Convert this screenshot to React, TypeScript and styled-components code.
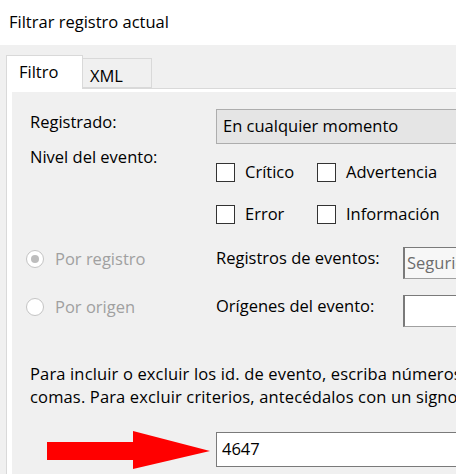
import * as React from "react";
import styled, { createGlobalStyle } from "styled-components";

const GlobalStyle = createGlobalStyle`
  html, body {
    margin: 0;
    padding: 0;
    background: #f0f0f0;
    overflow: hidden;
  }
  body {
    font-family: "Open Sans", "Noto Sans", sans-serif;
    font-size: 16.5px;
    color: #000;
  }
`;

const Dialog = styled.div`
  width: 456px;
  height: 474px;
  overflow: hidden;
  background: #f0f0f0;
`;

const TitleBar = styled.div`
  height: 45px;
  background: #fff;
  display: flex;
  align-items: center;
  padding-left: 9px;
  padding-bottom: 2px;
  box-sizing: border-box;
`;

const Body = styled.div`
  padding: 10px 0 0 6px;
`;

const TabStrip = styled.div`
  display: flex;
  align-items: flex-end;
  height: 33px;
  position: relative;
  z-index: 1;
`;

const Tab = styled.div<{ $active?: boolean }>`
  box-sizing: border-box;
  width: ${(p) => (p.$active ? "77px" : "69px")};
  height: ${(p) => (p.$active ? "34px" : "30px")};
  margin-bottom: ${(p) => (p.$active ? "-1px" : "0")};
  background: ${(p) => (p.$active ? "#fff" : "#f0f0f0")};
  border: 1px solid #d9d9d9;
  border-bottom: ${(p) => (p.$active ? "none" : "1px solid #d9d9d9")};
  border-left: ${(p) => (p.$active ? "1px solid #d9d9d9" : "none")};
  padding: ${(p) => (p.$active ? "4px 0 0 12px" : "5px 0 0 7px")};
  line-height: 24px;
`;

const TabPage = styled.div`
  border: 1px solid #d9d9d9;
  border-right: none;
  background: #fff;
  padding: 3px 0 0 5px;
`;

const Panel = styled.div`
  background: #f0f0f0;
  height: 420px;
  padding-top: 17px;
  box-sizing: border-box;
`;

const FieldGrid = styled.div`
  display: grid;
  grid-template-columns: 186px 1fr;
  padding-left: 18px;
`;

const Label = styled.div<{ $top?: number }>`
  display: flex;
  align-items: ${(p) => (p.$top !== undefined ? "flex-start" : "center")};
  padding-top: ${(p) => p.$top ?? 0}px;
  padding-bottom: ${(p) => (p.$top !== undefined ? 0 : 10)}px;
  color: #000;
  white-space: nowrap;
  line-height: 22px;
`;

const Combo = styled.div`
  height: 35px;
  box-sizing: border-box;
  background: #e5e5e5;
  border: 1px solid #adadad;
  border-right: none;
  display: flex;
  align-items: center;
  padding: 0 0 2px 6px;
  white-space: nowrap;
`;

const CheckGrid = styled.div`
  display: grid;
  grid-template-columns: 101px 1fr;
  grid-auto-rows: 42px;
  margin-top: 19px;
`;

const CheckItem = styled.label`
  display: flex;
  align-items: flex-start;
  gap: 10px;
  white-space: nowrap;
  line-height: 18px;
`;

const CheckBox = styled.span`
  width: 19px;
  height: 19px;
  box-sizing: border-box;
  border: 1px solid #333;
  background: #fff;
  flex: none;
`;

const SourceGrid = styled.div`
  display: grid;
  grid-template-columns: 190px 187px 1fr;
  grid-auto-rows: 32px;
  row-gap: 16px;
  padding-left: 14px;
`;

const RadioItem = styled.div`
  display: flex;
  align-items: center;
  gap: 11px;
  padding-bottom: 10px;
  color: #a0a0a0;
  white-space: nowrap;
`;

const Radio = styled.span<{ $checked?: boolean }>`
  width: 18px;
  height: 18px;
  box-sizing: border-box;
  border-radius: 50%;
  border: 1px solid #c4c4c4;
  background: #fff;
  display: flex;
  align-items: center;
  justify-content: center;
  flex: none;
  margin-top: 2px;
  &::after {
    content: "";
    width: 8px;
    height: 8px;
    border-radius: 50%;
    background: ${(p) => (p.$checked ? "#bdbdbd" : "transparent")};
  }
`;

const TextBox = styled.div<{ $disabled?: boolean }>`
  box-sizing: border-box;
  height: 100%;
  border: 1px solid #a0a0a0;
  border-top-color: #7a7a7a;
  border-left: 2px solid #7a7a7a;
  border-right: none;
  background: ${(p) => (p.$disabled ? "#f7f7f7" : "#fff")};
  color: ${(p) => (p.$disabled ? "#6d6d6d" : "#000")};
  display: flex;
  align-items: center;
  padding: 0 0 2px 2px;
  white-space: nowrap;
`;

const Help = styled.p`
  margin: 35px 0 0 0;
  padding-left: 18px;
  line-height: 23px;
  white-space: nowrap;
  letter-spacing: 0.15px;
  color: #000;
`;

const IdRow = styled.div`
  display: flex;
  align-items: flex-start;
  margin-top: 23px;
  padding-left: 35px;
`;

const IdInput = styled.div`
  box-sizing: border-box;
  margin-top: 1px;
  height: 35px;
  flex: 1;
  border: 1px solid #7a7a7a;
  border-right: none;
  background: #fff;
  display: flex;
  align-items: center;
  padding: 0 0 2px 5px;
`;

const Arrow = () => (
  <svg width="169" height="38" viewBox="0 0 169 38" style={{ flex: "none" }}>
    <rect x="0" y="11" width="87" height="18" fill="#ff0000" />
    <polygon points="86,0 163,20 86,38" fill="#ff0000" />
  </svg>
);

export default function App() {
  return (
    <Dialog>
      <GlobalStyle />
      <TitleBar>Filtrar registro actual</TitleBar>
      <Body>
        <TabStrip>
          <Tab $active>Filtro</Tab>
          <Tab>XML</Tab>
        </TabStrip>
        <TabPage>
          <Panel>
            <FieldGrid>
              <Label>Registrado:</Label>
              <Combo>En cualquier momento</Combo>
              <Label $top={2}>Nivel del evento:</Label>
              <CheckGrid>
                <CheckItem>
                  <CheckBox />
                  Crítico
                </CheckItem>
                <CheckItem>
                  <CheckBox />
                  Advertencia
                </CheckItem>
                <CheckItem>
                  <CheckBox />
                  Error
                </CheckItem>
                <CheckItem>
                  <CheckBox />
                  Información
                </CheckItem>
              </CheckGrid>
            </FieldGrid>
            <SourceGrid>
              <RadioItem>
                <Radio $checked />
                Por registro
              </RadioItem>
              <Label>Registros de eventos:</Label>
              <TextBox $disabled>Seguridad</TextBox>
              <RadioItem>
                <Radio />
                Por origen
              </RadioItem>
              <Label>Orígenes del evento:</Label>
              <TextBox />
            </SourceGrid>
            <Help>
              Para incluir o excluir los id. de evento, escriba números o intervalos separados por
              <br />
              comas. Para excluir criterios, antecédalos con un signo menos. Por ejemplo 1,3,5-99,-76
            </Help>
            <IdRow>
              <Arrow />
              <IdInput>4647</IdInput>
            </IdRow>
          </Panel>
        </TabPage>
      </Body>
    </Dialog>
  );
}
